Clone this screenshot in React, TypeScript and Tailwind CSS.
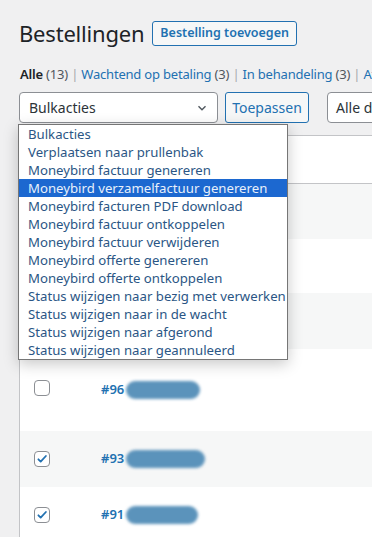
import React from "react";

const bulkActions = [
  "Bulkacties",
  "Verplaatsen naar prullenbak",
  "Moneybird factuur genereren",
  "Moneybird verzamelfactuur genereren",
  "Moneybird facturen PDF download",
  "Moneybird factuur ontkoppelen",
  "Moneybird factuur verwijderen",
  "Moneybird offerte genereren",
  "Moneybird offerte ontkoppelen",
  "Status wijzigen naar bezig met verwerken",
  "Status wijzigen naar in de wacht",
  "Status wijzigen naar afgerond",
  "Status wijzigen naar geannuleerd",
];

function Checkbox({ checked }: { checked?: boolean }) {
  return (
    <span className="w-4 h-4 rounded-[4px] border border-[#8c8f94] bg-white flex items-center justify-center">
      {checked && (
        <svg width="12" height="12" viewBox="0 0 20 20">
          <path d="M4 10.5l3.8 3.8L16.5 5" fill="none" stroke="#2271b1" strokeWidth="3" strokeLinecap="round" strokeLinejoin="round" />
        </svg>
      )}
    </span>
  );
}

function OrderRow({ id, checked, stripe, tall, pill }: { id: string; checked?: boolean; stripe?: boolean; tall?: boolean; pill: number }) {
  return (
    <div className={`flex ${tall ? "h-[82px] items-start pt-[31px]" : "h-[56px] items-center"} ${stripe ? "bg-[#f6f7f7]" : "bg-white"}`}>
      <div className="w-[81px] pl-[14px] flex">
        <Checkbox checked={checked} />
      </div>
      <div className="flex items-center gap-[2px]">
        <span className="text-[13px] font-semibold text-[#2271b1]">{id}</span>
        <span className="h-[18px] rounded-full bg-[#5b93bb] blur-[1.5px]" style={{ width: pill }} />
      </div>
    </div>
  );
}

export default function App() {
  return (
    <div className="w-[372px] h-[537px] overflow-hidden bg-[#f0f0f1] text-[#1d2327] font-['Noto_Sans',sans-serif]">
      <div className="pl-[19px] pt-[18px] flex items-center gap-[8px] whitespace-nowrap">
        <h1 className="text-[22px] leading-[30px] font-normal tracking-[-0.2px]">Bestellingen</h1>
        <button className="shrink-0 h-[25px] px-[7px] border border-[#2271b1] rounded-[3px] bg-[#f6f7f7] text-[#2271b1] text-[12.5px] font-semibold leading-none">
          Bestelling toevoegen
        </button>
      </div>

      <div className="pl-[20px] mt-[17px] text-[13px] leading-[18px] whitespace-nowrap text-[#50575e] tracking-[-0.2px]">
        <span className="font-semibold text-[#1d2327]">Alle</span> (13) <span className="text-[#a7aaad]">|</span>{" "}
        <span className="text-[#2271b1]">Wachtend op betaling</span> (3) <span className="text-[#a7aaad]">|</span>{" "}
        <span className="text-[#2271b1]">In behandeling</span> (3) <span className="text-[#a7aaad]">|</span>{" "}
        <span className="text-[#2271b1]">Afgerond</span>
      </div>

      <div className="relative pl-[19px] mt-[9px] flex items-center whitespace-nowrap">
        <div className="shrink-0 w-[199px] h-[31px] border border-[#8c8f94] rounded-[4px] bg-white flex items-center justify-between pl-[9px] pr-[8px] text-[14px] text-[#2c3338]">
          <span>Bulkacties</span>
          <svg width="14" height="14" viewBox="0 0 20 20">
            <path d="M5 7.5l5 5 5-5" fill="none" stroke="#50575e" strokeWidth="2" />
          </svg>
        </div>
        <button className="shrink-0 ml-[7px] h-[31px] w-[84px] border border-[#2271b1] rounded-[3px] bg-[#f6f7f7] text-[#2271b1] text-[14px]">
          Toepassen
        </button>
        <div className="shrink-0 ml-[18px] h-[31px] w-[120px] border border-[#8c8f94] rounded-[4px] bg-white flex items-center pl-[8px] text-[14px] text-[#2c3338]">
          Alle datums
        </div>

        <div className="absolute left-[18px] top-[32px] z-10 w-[270px] border border-[#767676] bg-white shadow-[0_4px_14px_rgba(0,0,0,0.22)]">
          {bulkActions.map((a, i) => (
            <div
              key={a}
              className={`h-[18px] leading-[18px] pl-[9px] text-[13.2px] ${i === 3 ? "bg-[#1c68d0] text-[#e8f0fb]" : "text-[#2b5685]"}`}
            >
              {a}
            </div>
          ))}
        </div>
      </div>

      <div className="ml-[19px] mt-[12px] bg-white border-l border-t border-[#c3c4c7]">
        <div className="h-[48px] border-b border-[#c3c4c7]" />
        <div className="h-[55px] bg-[#f6f7f7]" />
        <div className="h-[54px] bg-white" />
        <div className="h-[56px] bg-[#f6f7f7]" />
        <OrderRow id="#96" tall pill={74} />
        <OrderRow id="#93" checked stripe pill={79} />
        <OrderRow id="#91" checked pill={72} />
      </div>
    </div>
  );
}
